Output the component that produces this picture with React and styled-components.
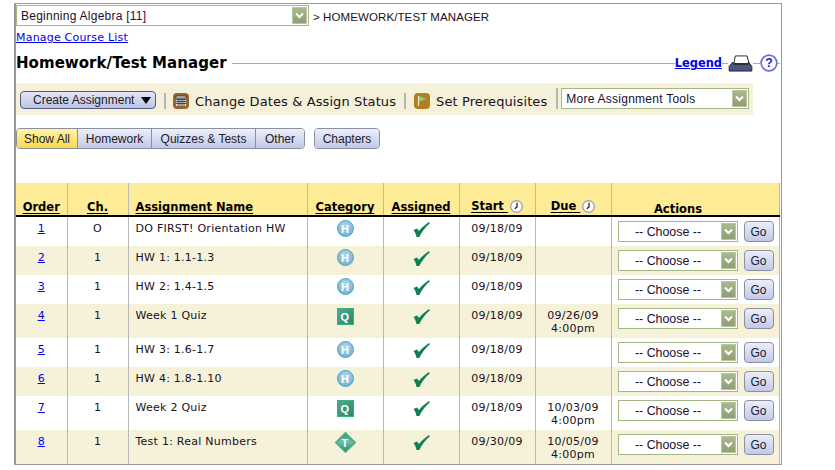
import React from 'react'
import styled, { createGlobalStyle } from 'styled-components'

const GlobalStyle = createGlobalStyle`
  html, body { margin: 0; padding: 0; background: #fff; }
  body { font-family: "DejaVu Sans", Verdana, sans-serif; color: #1a1020; }
`

const rows = [
  { order: 1, ch: 'O', name: 'DO FIRST! Orientation HW', cat: 'H', start: '09/18/09' },
  { order: 2, ch: '1', name: 'HW 1: 1.1-1.3', cat: 'H', start: '09/18/09' },
  { order: 3, ch: '1', name: 'HW 2: 1.4-1.5', cat: 'H', start: '09/18/09' },
  { order: 4, ch: '1', name: 'Week 1 Quiz', cat: 'Q', start: '09/18/09', due: '09/26/09', time: '4:00pm' },
  { order: 5, ch: '1', name: 'HW 3: 1.6-1.7', cat: 'H', start: '09/18/09' },
  { order: 6, ch: '1', name: 'HW 4: 1.8-1.10', cat: 'H', start: '09/18/09' },
  { order: 7, ch: '1', name: 'Week 2 Quiz', cat: 'Q', start: '09/18/09', due: '10/03/09', time: '4:00pm' },
  { order: 8, ch: '1', name: 'Test 1: Real Numbers', cat: 'T', start: '09/30/09', due: '10/05/09', time: '4:00pm' },
]

const Frame = styled.div`
  box-sizing: border-box;
  width: 768px;
  height: 462px;
  margin: 3px 0 0 14px;
  border: 1px solid #999;
  border-width: 1px 1px 1px 2px;
  padding: 1px 1px 0 0;
`

const CourseRow = styled.div`
  display: flex;
  align-items: center;
  height: 21px;
`

const Crumb = styled.span`
  margin: 3px 0 0 4px;
  font: 11.5px "Liberation Sans", Arial, sans-serif;
  letter-spacing: 0.1px;
`

const SelectBox = styled.div`
  box-sizing: border-box;
  display: flex;
  align-items: center;
  width: ${p => p.$w}px;
  height: 21px;
  border: 1px solid #a3b884;
  background: #fff;
  padding: 1px;
  font: 12px "Liberation Sans", Arial, sans-serif;
  letter-spacing: 0.25px;
  color: #201030;
`

const ToolSelect = styled(SelectBox)`
  margin-top: -5px;
`

const SelectText = styled.span`
  flex: 1;
  padding-left: ${p => p.$pad}px;
  white-space: nowrap;
`

const ChooseText = styled.span`
  flex: 1;
  padding-right: 4px;
  text-align: center;
  font-size: 12.4px;
  letter-spacing: 0;
  white-space: nowrap;
`

const Arrow = styled.span`
  display: flex;
  align-items: center;
  justify-content: center;
  width: 15px;
  align-self: stretch;
  background: linear-gradient(#a9b98f, #8f9f73);
  border: 1px solid #b9c6a4;
  box-sizing: border-box;
`

const Chevron = () => (
  <svg width="9" height="7" viewBox="0 0 9 7">
    <path d="M1 1.5l3.5 3.5L8 1.5" fill="none" stroke="#fff" strokeWidth="2" />
  </svg>
)

const ManageLink = styled.a`
  display: block;
  margin-top: 5px;
  height: 14px;
  font-size: 11px;
  line-height: 14px;
  letter-spacing: 0.2px;
  color: #0000ee;
  text-decoration: underline;
`

const TitleRow = styled.div`
  display: flex;
  align-items: center;
  height: 26px;
  margin-top: 5px;
`

const Title = styled.h1`
  margin: 0;
  font-size: 15px;
  font-weight: bold;
  letter-spacing: 0.05px;
  color: #000;
  white-space: nowrap;
`

const Rule = styled.span`
  flex: ${p => p.$grow ? 1 : 'none'};
  width: ${p => p.$w || 0}px;
  height: 1px;
  background: #aaa;
  margin-left: ${p => p.$ml || 0}px;
`

const LegendLink = styled.a`
  font-size: 11.4px;
  font-weight: bold;
  color: #0000ee;
  text-decoration: underline;
`

const IconSlot = styled.span`
  display: flex;
  flex: none;
`

const Toolbar = styled.div`
  display: flex;
  align-items: center;
  width: 737px;
  height: 32px;
  margin-top: 7px;
  padding: 4px 0 0 4px;
  box-sizing: border-box;
  background: #f5f0d9;
`

const CreateButton = styled.button`
  box-sizing: border-box;
  display: flex;
  align-items: center;
  width: 136px;
  height: 18px;
  margin-top: -2px;
  padding: 0 4px 0 12px;
  border: 1px solid #555a80;
  border-radius: 4px;
  background: linear-gradient(#e3e6f6, #bcc4e6);
  font: 12px "Liberation Sans", Arial, sans-serif;
  color: #20202a;
`

const Caret = styled.span`
  margin-left: auto;
  border-left: 5px solid transparent;
  border-right: 5px solid transparent;
  border-top: 7px solid #000;
`

const Sep = styled.span`
  flex: none;
  width: 2px;
  height: ${p => p.$h || 16}px;
  margin: ${p => p.$m};
  background: #b4b4b0;
`

const ToolLabel = styled.span`
  margin-left: 6px;
  font-size: 13px;
  white-space: nowrap;
  letter-spacing: 0.1px;
`

const TabRow = styled.div`
  display: flex;
  margin-top: 13px;
`

const TabGroup = styled.div`
  display: flex;
  box-sizing: border-box;
  height: 21px;
  border: 1px solid #8d8f9c;
  border-radius: 4px;
  overflow: hidden;
`

const Tab = styled.button`
  box-sizing: border-box;
  width: ${p => p.$w}px;
  height: 100%;
  padding: 0;
  border: 0;
  border-left: ${p => p.$first ? '0' : '1px solid #8d8f9c'};
  background: ${p => p.$active
    ? 'linear-gradient(#fff3a8, #f8d94e)'
    : 'linear-gradient(#eceef9, #c2c9e8)'};
  font: 12px "Liberation Sans", Arial, sans-serif;
  color: #20202a;
`

const ChaptersGroup = styled(TabGroup)`
  margin-left: 9px;
`

const Table = styled.table`
  width: 763px;
  margin-top: 34px;
  table-layout: fixed;
  border-collapse: collapse;
  border-right: 1px solid #b8b8b8;
  font-size: 11px;
  letter-spacing: 0.25px;
`

const Head = styled.th`
  height: 32px;
  vertical-align: bottom;
  background: #feeb96;
  border-bottom: 2px solid #000;
  border-right: 1px solid #b8b8b8;
  font-size: 11.5px;
  line-height: 15px;
  letter-spacing: 0;
  color: #000;
  text-align: ${p => p.$left ? 'left' : 'center'};
  padding: 0 0 0 ${p => p.$left ? 7 : 0}px;
  white-space: nowrap;
  u { text-underline-offset: 2px; }
`

const ClockHead = styled(Head)`
  height: 31px;
  padding-bottom: 1px;
`

const ActionsHead = styled(Head)`
  padding: 0 34px 0 0;
  line-height: 11px;
`

const HeadInner = styled.span`
  display: inline-flex;
  align-items: center;
  gap: 2px;
`

const Row = styled.tr`
  background: ${p => p.$alt ? '#f6f2da' : '#fff'};
  height: ${p => p.$h}px;
`

const Cell = styled.td`
  padding: ${p => p.$top ?? 5}px 0 0 ${p => p.$left ? 7 : 0}px;
  vertical-align: top;
  border-right: 1px solid #b8b8b8;
  text-align: ${p => p.$left ? 'left' : 'center'};
  line-height: 13px;
  white-space: nowrap;
`

const OrderLink = styled.a`
  color: #0000ee;
  text-decoration: underline;
`

const BadgeBase = styled.span`
  display: flex;
  align-items: center;
  justify-content: center;
  width: 17px;
  height: 17px;
  margin: 0 auto;
  font: bold 11px "Liberation Sans", Arial, sans-serif;
  color: #fff;
`

const CircleBadge = styled(BadgeBase)`
  border-radius: 50%;
  border: 1px solid #45aac8;
  box-sizing: border-box;
  background: radial-gradient(circle at 50% 35%, #b4d8ea, #6ba5cb);
`

const SquareBadge = styled(BadgeBase)`
  border: 1px solid #35b27c;
  box-sizing: border-box;
  background: linear-gradient(135deg, #5aa592, #1f8c66);
`

const DiamondWrap = styled.span`
  position: relative;
  display: flex;
  align-items: center;
  justify-content: center;
  width: 21px;
  height: 21px;
  margin: 0 auto;
`

const DiamondShape = styled.span`
  position: absolute;
  width: 15px;
  height: 15px;
  transform: rotate(45deg);
  background: linear-gradient(135deg, #2f9f78, #6dbba4 50%, #1f8c66);
  border: 1px solid #3ab583;
  box-sizing: border-box;
`

const DiamondLetter = styled.span`
  position: relative;
  font: bold 11px "Liberation Sans", Arial, sans-serif;
  color: #fff;
`

const CategoryIcon = ({ type }) => {
  if (type === 'H') return <CircleBadge>H</CircleBadge>
  if (type === 'Q') return <SquareBadge>Q</SquareBadge>
  return (
    <DiamondWrap>
      <DiamondShape />
      <DiamondLetter>T</DiamondLetter>
    </DiamondWrap>
  )
}

const categoryTop = { H: 3, Q: 4, T: 2 }

const CheckMark = styled.svg`
  display: block;
  margin: 0 auto;
`

const Check = () => (
  <CheckMark width="17" height="15" viewBox="0 0 17 15">
    <path d="M0.500 8L4 6.500L6 9C8 6 12 3 16 0L16.800 1.500C13 4.500 9 9.500 6.300 15H3.500C3 12 2 10 0.500 8z" fill="#0f8050" />
  </CheckMark>
)

const Clock = () => (
  <svg width="13" height="13" viewBox="0 0 13 13">
    <circle cx="6.500" cy="6.500" r="5.800" fill="#fff" stroke="#9a9aa8" strokeWidth="1.200" />
    <path d="M7 2.800V7L4.800 8.800" fill="none" stroke="#111" strokeWidth="1.200" />
  </svg>
)

const Printer = () => (
  <svg width="25" height="17" viewBox="0 0 26 18">
    <path d="M6 9L7.500 1H20L22 9z" fill="#fff" stroke="#222" strokeWidth="1" />
    <path d="M5 7.500L1 12V17H25V12L21.500 7.500L21 10H5.500z" fill="#4f5388" stroke="#222" strokeWidth="1" />
  </svg>
)

const Help = () => (
  <svg width="18" height="18" viewBox="0 0 19 19">
    <circle cx="9.500" cy="9.500" r="8.300" fill="#fff" stroke="#6a6fd8" strokeWidth="1.800" />
    <text x="9.500" y="14" textAnchor="middle" fontFamily="Liberation Sans" fontWeight="bold" fontSize="13" fill="#2222bb">?</text>
  </svg>
)

const Calendar = () => (
  <svg width="16" height="16" viewBox="0 0 16 16">
    <rect width="16" height="16" rx="4" fill="#94682c" />
    <rect x="3" y="3" width="10" height="10" fill="#e8e6e6" />
    <path d="M3 3h10v2H3zM3 6.500h10M3 8.500h10M3 10.500h10M5 5v8M7 5v8M9 5v8M11 5v8" stroke="#333" strokeWidth="0.800" fill="none" />
  </svg>
)

const Flag = () => (
  <svg width="16" height="16" viewBox="0 0 16 16">
    <rect width="16" height="16" rx="4" fill="#b07f20" />
    <path d="M4.500 3v10" stroke="#e6e6d2" strokeWidth="1.200" />
    <path d="M5 3.200L12.500 5.800L5 8.800z" fill="#8fcf78" />
  </svg>
)

const ActionWrap = styled.div`
  display: flex;
  align-items: center;
  padding-left: 6px;
`

const GoButton = styled.button`
  box-sizing: border-box;
  width: 30px;
  height: 21px;
  margin-left: 6px;
  padding: 0;
  border: 1px solid #8d8f9c;
  border-radius: 4px;
  background: linear-gradient(#eceef9, #c2c9e8);
  font: 12px "Liberation Sans", Arial, sans-serif;
  color: #20202a;
`

const widths = [51, 61, 179, 76, 76, 76, 76, 168]

const App = () => {
  return (
    <>
      <GlobalStyle />
      <Frame>
        <CourseRow>
          <SelectBox $w={293}>
            <SelectText $pad={3}>Beginning Algebra [11]</SelectText>
            <Arrow><Chevron /></Arrow>
          </SelectBox>
          <Crumb>&gt; HOMEWORK/TEST MANAGER</Crumb>
        </CourseRow>
        <ManageLink>Manage Course List</ManageLink>
        <TitleRow>
          <Title>Homework/Test Manager</Title>
          <Rule $grow $ml={5} />
          <LegendLink>Legend</LegendLink>
          <Rule $w={6} />
          <IconSlot><Printer /></IconSlot>
          <Rule $w={7} />
          <IconSlot><Help /></IconSlot>
          <Rule $w={2} />
        </TitleRow>
        <Toolbar>
          <CreateButton>Create Assignment<Caret /></CreateButton>
          <Sep $m="0 7px 0 8px" />
          <IconSlot><Calendar /></IconSlot>
          <ToolLabel>Change Dates &amp; Assign Status</ToolLabel>
          <Sep $m="0 8px 0 8px" />
          <IconSlot><Flag /></IconSlot>
          <ToolLabel>Set Prerequisites</ToolLabel>
          <Sep $m="-5px 3px 0 9px" $h={21} />
          <ToolSelect $w={188}>
            <SelectText $pad={3}>More Assignment Tools</SelectText>
            <Arrow><Chevron /></Arrow>
          </ToolSelect>
        </Toolbar>
        <TabRow>
          <TabGroup>
            <Tab $first $active $w={60}>Show All</Tab>
            <Tab $w={74}>Homework</Tab>
            <Tab $w={104}>Quizzes &amp; Tests</Tab>
            <Tab $w={49}>Other</Tab>
          </TabGroup>
          <ChaptersGroup>
            <Tab $first $w={64}>Chapters</Tab>
          </ChaptersGroup>
        </TabRow>
        <Table>
          <colgroup>
            {widths.map((w, i) => <col key={i} style={{ width: w }} />)}
          </colgroup>
          <thead>
            <tr>
              <Head><u>Order</u></Head>
              <Head><u>Ch.</u></Head>
              <Head $left><u>Assignment Name</u></Head>
              <Head><u>Category</u></Head>
              <Head><u>Assigned</u></Head>
              <ClockHead><HeadInner><u>Start&nbsp;</u><Clock /></HeadInner></ClockHead>
              <ClockHead><HeadInner><u>Due&nbsp;</u><Clock /></HeadInner></ClockHead>
              <ActionsHead>Actions</ActionsHead>
            </tr>
          </thead>
          <tbody>
            {rows.map((r, i) => (
              <Row key={r.order} $alt={i % 2 === 1} $h={i === 0 ? 30 : r.due ? 34 : 29}>
                <Cell><OrderLink>{r.order}</OrderLink></Cell>
                <Cell>{r.ch}</Cell>
                <Cell $left>{r.name}</Cell>
                <Cell $top={categoryTop[r.cat]}><CategoryIcon type={r.cat} /></Cell>
                <Cell><Check /></Cell>
                <Cell>{r.start}</Cell>
                <Cell>{r.due}{r.time && <br />}{r.time}</Cell>
                <Cell $top={4}>
                  <ActionWrap>
                    <SelectBox $w={120}>
                      <ChooseText>-- Choose --</ChooseText>
                      <Arrow><Chevron /></Arrow>
                    </SelectBox>
                    <GoButton>Go</GoButton>
                  </ActionWrap>
                </Cell>
              </Row>
            ))}
          </tbody>
        </Table>
      </Frame>
    </>
  )
}

export default App
